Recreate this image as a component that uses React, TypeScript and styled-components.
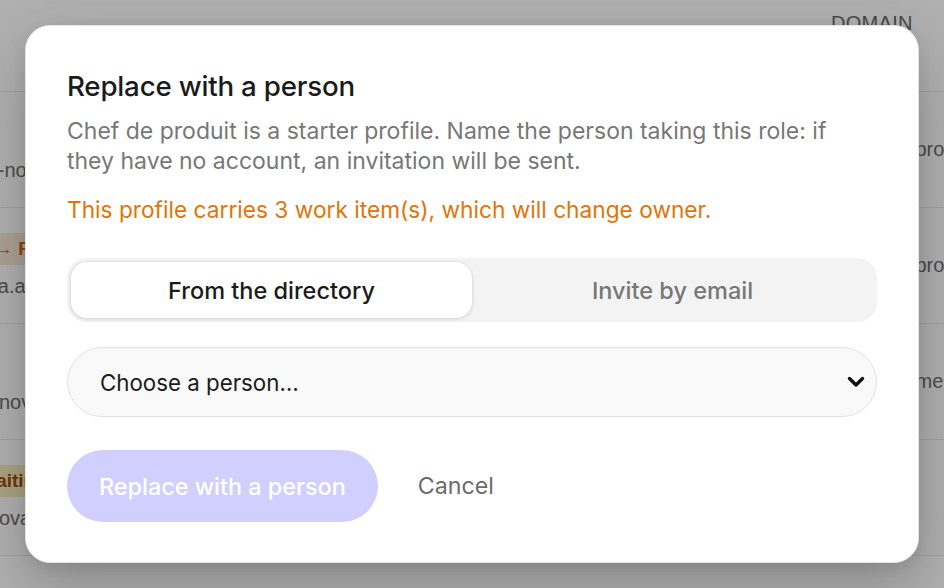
import React from "react";
import styled, { createGlobalStyle } from "styled-components";

const Global = createGlobalStyle`
  html, body { margin: 0; padding: 0; }
  body {
    width: 944px;
    height: 588px;
    overflow: hidden;
    background: #ffffff;
    font-family: Inter, "Noto Sans", sans-serif;
  }
  * { box-sizing: border-box; }
`;

const Page = styled.div`
  position: relative;
  width: 944px;
  height: 588px;
  overflow: hidden;
  background: #ffffff;
`;

/* ---------- background table (scrolled horizontally) ---------- */
const Table = styled.div`
  display: flex;
  flex-direction: column;
  width: 1024px;
  margin-left: -40px;
  font-family: "Liberation Sans", Arial, sans-serif;
  color: #6b6b6b;
`;

const HeadRow = styled.div`
  display: grid;
  grid-template-columns: 260px 611px 1fr;
  height: 92px;
  padding-top: 12px;
  border-bottom: 1px solid #e6e6e6;
`;

const HeadCell = styled.div`
  font-size: 20px;
  letter-spacing: 0.3px;
  text-transform: uppercase;
  color: #6a6a6a;
`;

const Row = styled.div`
  display: grid;
  grid-template-columns: 260px 611px 1fr;
  align-items: center;
  height: 116px;
  border-bottom: 1px solid #e8e8e8;
`;

const PersonCell = styled.div`
  display: flex;
  flex-direction: column;
  gap: 10px;
`;

const Slot = styled.div<{ $indent?: number }>`
  height: 32px;
  display: flex;
  align-items: center;
  padding-left: ${(p) => p.$indent ?? 0}px;
`;

const Badge = styled.span<{ $tone: "orange" | "yellow" }>`
  display: inline-flex;
  align-items: center;
  height: 32px;
  padding: 0 8px;
  border-radius: 6px;
  font-size: 19px;
  font-weight: 600;
  white-space: nowrap;
  background: ${(p) => (p.$tone === "orange" ? "#fbe9d8" : "#f6ecbe")};
  color: ${(p) => (p.$tone === "orange" ? "#d06a12" : "#a34f06")};
`;

const Email = styled.div`
  font-size: 20px;
  color: #6e6e6e;
  white-space: nowrap;
`;

const DomainCell = styled.div`
  font-size: 20px;
  color: #6e6e6e;
  white-space: nowrap;
`;

/* ---------- overlay + modal ---------- */
const Overlay = styled.div`
  position: absolute;
  inset: 0;
  background: rgba(0, 0, 0, 0.31);
  display: flex;
  align-items: center;
  justify-content: center;
`;

const Modal = styled.div`
  width: 894px;
  background: #ffffff;
  border: 1px solid #e4e4e4;
  border-radius: 25px;
  padding: 43px 41px 40px 41px;
  display: flex;
  flex-direction: column;
  box-shadow: 0 24px 60px rgba(0, 0, 0, 0.22), 0 4px 14px rgba(0, 0, 0, 0.08);
`;

const Title = styled.h2`
  margin: 0;
  font-size: 27.7px;
  line-height: 34px;
  font-weight: 500;
  color: #1b1b1b;
  letter-spacing: -0.2px;
`;

const Description = styled.p`
  margin: 13px 0 0;
  font-size: 23px;
  line-height: 30px;
  color: #777777;
`;

const Warning = styled.p`
  margin: 19px 0 0;
  font-size: 22.7px;
  line-height: 30px;
  color: #e27508;
`;

const Tabs = styled.div`
  margin-top: 33px;
  display: grid;
  grid-template-columns: 1fr 1fr;
  padding: 4px;
  height: 64px;
  background: #f3f3f3;
  border-radius: 20px;
`;

const Tab = styled.button<{ $active?: boolean }>`
  border: none;
  font-family: inherit;
  font-size: 23.5px;
  font-weight: 500;
  border-radius: 16px;
  cursor: pointer;
  background: ${(p) => (p.$active ? "#ffffff" : "transparent")};
  color: ${(p) => (p.$active ? "#1b1b1b" : "#777777")};
  box-shadow: ${(p) =>
    p.$active ? "0 1px 4px rgba(0,0,0,0.12), 0 0 0 1px rgba(0,0,0,0.03)" : "none"};
`;

const SelectWrap = styled.div`
  position: relative;
  margin-top: 25px;
`;

const Select = styled.select`
  appearance: none;
  width: 100%;
  height: 70px;
  padding: 0 60px 0 32px;
  border-radius: 35px;
  border: 1.5px solid #e2e2e2;
  background: #f9f9f9;
  font-family: inherit;
  font-size: 22.3px;
  color: #1b1b1b;
  outline: none;
`;

const Chevron = styled.svg`
  position: absolute;
  right: 12px;
  top: 50%;
  transform: translateY(-50%);
  width: 18px;
  height: 12px;
  pointer-events: none;
`;

const Actions = styled.div`
  margin-top: 33px;
  display: flex;
  align-items: center;
  gap: 40px;
`;

const PrimaryButton = styled.button`
  height: 72px;
  padding: 0 32px;
  border: none;
  border-radius: 36px;
  background: #d0cffd;
  color: #ffffff;
  font-family: inherit;
  font-size: 23.4px;
  font-weight: 500;
`;

const GhostButton = styled.button`
  border: none;
  background: none;
  padding: 0;
  font-family: inherit;
  font-size: 23.2px;
  color: #6b6b6b;
`;

type BadgeInfo = { tone: "orange" | "yellow"; text: string; indent: number };

const rows: { badge: BadgeInfo | null; email: string; domain: string }[] = [
  { badge: null, email: "jean-nowak@entreprise.fr", domain: "Direction produit" },
  {
    badge: { tone: "orange", text: "→ Profil de départ", indent: 26 },
    email: "diana.aubert@entreprise.fr",
    domain: "Direction produit",
  },
  { badge: null, email: "tom.novak@entreprise.fr", domain: "Direction membres" },
  {
    badge: { tone: "yellow", text: "Awaiting", indent: 0 },
    email: "ana.ovadia@entreprise.fr",
    domain: "",
  },
];

export default function App() {
  return (
    <Page>
      <Global />
      <Table>
        <HeadRow>
          <HeadCell />
          <HeadCell />
          <HeadCell>Domain</HeadCell>
        </HeadRow>
        {rows.map((r, i) => (
          <Row key={i}>
            <PersonCell>
              <Slot $indent={r.badge?.indent}>
                {r.badge && <Badge $tone={r.badge.tone}>{r.badge.text}</Badge>}
              </Slot>
              <Email>{r.email}</Email>
            </PersonCell>
            <div />
            <DomainCell>{r.domain}</DomainCell>
          </Row>
        ))}
      </Table>

      <Overlay>
        <Modal>
          <Title>Replace with a person</Title>
          <Description>
            Chef de produit is a starter profile. Name the person taking this role: if
            they have no account, an invitation will be sent.
          </Description>
          <Warning>This profile carries 3 work item(s), which will change owner.</Warning>
          <Tabs>
            <Tab $active>From the directory</Tab>
            <Tab>Invite by email</Tab>
          </Tabs>
          <SelectWrap>
            <Select defaultValue="">
              <option value="">Choose a person…</option>
            </Select>
            <Chevron viewBox="0 0 18 12">
              <path
                d="M2.5 2.5 L9 9 L15.5 2.5"
                fill="none"
                stroke="#111"
                strokeWidth="3.4"
                strokeLinecap="round"
                strokeLinejoin="round"
              />
            </Chevron>
          </SelectWrap>
          <Actions>
            <PrimaryButton disabled>Replace with a person</PrimaryButton>
            <GhostButton>Cancel</GhostButton>
          </Actions>
        </Modal>
      </Overlay>
    </Page>
  );
}
